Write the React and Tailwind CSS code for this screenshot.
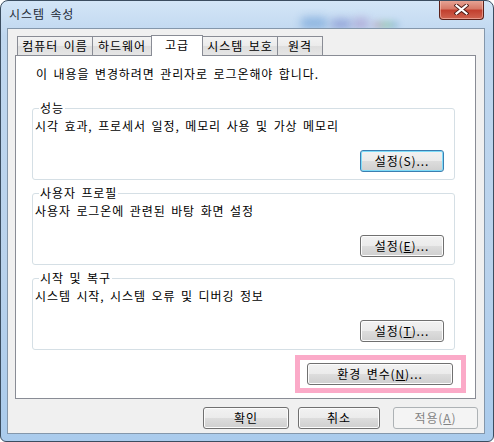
import React from 'react';

const Btn = ({ children, className = '', focus, disabled }) => {
  let look = 'border-[#707070] bg-[linear-gradient(#f2f2f2,#ebebeb_50%,#dddddd_50%,#cfcfcf)] shadow-[inset_0_0_0_1px_#fcfcfc] text-black';
  if (focus) look = 'border-[#3c7fb1] bg-[linear-gradient(#f2f2f2,#ebebeb_50%,#dddddd_50%,#cfcfcf)] shadow-[inset_0_0_0_1px_#7fdcf9] text-black';
  if (disabled) look = 'border-[#adb2b5] bg-[#f4f4f4] text-[#838383]';
  return (
    <div className={`h-[22px] shrink-0 rounded-[3px] border flex items-center justify-center leading-[20px] ${look} ${className}`}>
      {children}
    </div>
  );
};

const Group = ({ label, desc, btn, className = '' }) => (
  <div className={`relative ml-[16px] w-[423px] h-[72px] rounded-[3px] border border-[#d5dfe5] flex flex-col ${className}`}>
    <span className="absolute -top-[9px] left-[6px] px-[1px] bg-white leading-[16px]">{label}</span>
    <p className="pt-[9px] pl-[2px] leading-[16px]">{desc}</p>
    <div className="mt-[16px] flex justify-end pr-[10px]">{btn}</div>
  </div>
);

export default function App() {
  const tabs = [
    { t: '컴퓨터 이름', w: 'w-[76px]' },
    { t: '하드웨어', w: 'w-[60px]' },
    { t: '고급', w: 'w-[52px]', sel: true },
    { t: '시스템 보호', w: 'w-[76px]' },
    { t: '원격', w: 'w-[46px]' },
  ];

  return (
    <div className="relative w-[494px] h-[442px] overflow-hidden rounded-t-[8px] rounded-b-[6px] border border-[#3b4d60] bg-[linear-gradient(#d3e5f7,#bfd7ef_8%,#b9d2ec_60%,#aacbec)] font-['Noto_Sans_CJK_KR','Noto_Sans',sans-serif] text-[12px] text-black tracking-[0.9px] [word-spacing:2px]">
      {/* blurred desktop behind the glass */}
      <div className="absolute left-[300px] top-[16px] w-[26px] h-[12px] rounded bg-[#3f7fc9] opacity-40 blur-[4px]" />
      <div className="absolute left-[330px] top-[18px] w-[20px] h-[10px] rounded bg-[#4a55b5] opacity-40 blur-[4px]" />
      <div className="absolute left-[352px] top-[17px] w-[16px] h-[11px] rounded bg-[#8a5cb0] opacity-35 blur-[4px]" />
      <div className="absolute left-[372px] top-[20px] w-[26px] h-[8px] rounded bg-[linear-gradient(90deg,#c85a9a,#5fb35f,#5a8fd6)] opacity-35 blur-[3px]" />

      {/* title bar */}
      <div className="relative flex h-[27px] items-start justify-between pl-[8px] pr-[9px]">
        <span className="pt-[5px] leading-[16px] text-[#1e2a36]">시스템 속성</span>
        <div className="-mt-px flex h-[20px] w-[45px] items-center justify-center rounded-b-[4px] border border-t-0 border-[#5b2119] bg-[linear-gradient(#e8a899,#d77a68_45%,#c2402f_55%,#cf6450)] shadow-[inset_0_0_0_1px_rgba(255,210,200,0.5)]">
          <svg width="15" height="11" viewBox="0 0 15 11">
            <path d="M2.5 1.5 L12.5 9.5 M12.5 1.5 L2.5 9.5" stroke="#4a1a14" strokeWidth="4" strokeLinecap="square" />
            <path d="M2.5 1.5 L12.5 9.5 M12.5 1.5 L2.5 9.5" stroke="#ffffff" strokeWidth="2.2" strokeLinecap="square" />
          </svg>
        </div>
      </div>

      {/* client area */}
      <div className="relative ml-[6px] w-[478px] h-[406px] border border-[#8497ab] bg-[#f0f0f0] pt-[6px]">
        {/* tabs */}
        <div className="ml-[9px] flex h-[20px] items-end">
          {tabs.map((tab, i) =>
            tab.sel ? (
              <div key={i} className={`relative z-10 -ml-px -mb-px flex h-[21px] items-start justify-center border border-b-0 border-[#898c95] bg-white pt-[1px] leading-[16px] ${tab.w}`}>
                {tab.t}
              </div>
            ) : (
              <div key={i} className={`flex h-[19px] items-center justify-center border border-b-0 border-[#898c95] bg-[linear-gradient(#f3f3f3,#ebebeb_50%,#dedede_50%,#e5e5e5)] leading-[16px] ${i === 0 ? '' : '-ml-px'} ${tab.w}`}>
                {tab.t}
              </div>
            )
          )}
        </div>

        {/* tab panel */}
        <div className="ml-[7px] w-[461px] h-[344px] border border-[#898c95] bg-white">
          <p className="pt-[10px] pl-[20px] leading-[16px]">이 내용을 변경하려면 관리자로 로그온해야 합니다.</p>

          <Group
            className="mt-[26px]"
            label="성능"
            desc="시각 효과, 프로세서 일정, 메모리 사용 및 가상 메모리"
            btn={<Btn className="w-[84px]" focus>설정(S)...</Btn>}
          />
          <Group
            className="mt-[13px]"
            label="사용자 프로필"
            desc="사용자 로그온에 관련된 바탕 화면 설정"
            btn={<Btn className="w-[84px]">설정(<span className="underline">E</span>)...</Btn>}
          />
          <Group
            className="mt-[13px]"
            label="시작 및 복구"
            desc="시스템 시작, 시스템 오류 및 디버깅 정보"
            btn={<Btn className="w-[84px]">설정(<span className="underline">T</span>)...</Btn>}
          />

          <div className="ml-[279px] mt-[5px] w-[171px] h-[38px] border-[5px] border-[#fbaac8] pl-[7px] pt-[3px]">
            <Btn className="w-[146px]">환경 변수(<span className="underline">N</span>)...</Btn>
          </div>
        </div>

        {/* dialog buttons */}
        <div className="mt-[8px] ml-[195px] flex">
          <Btn className="w-[86px]">확인</Btn>
          <Btn className="ml-[9px] w-[82px]">취소</Btn>
          <Btn className="ml-[13px] w-[85px]" disabled>적용(<span className="underline">A</span>)</Btn>
        </div>
      </div>
    </div>
  );
}
